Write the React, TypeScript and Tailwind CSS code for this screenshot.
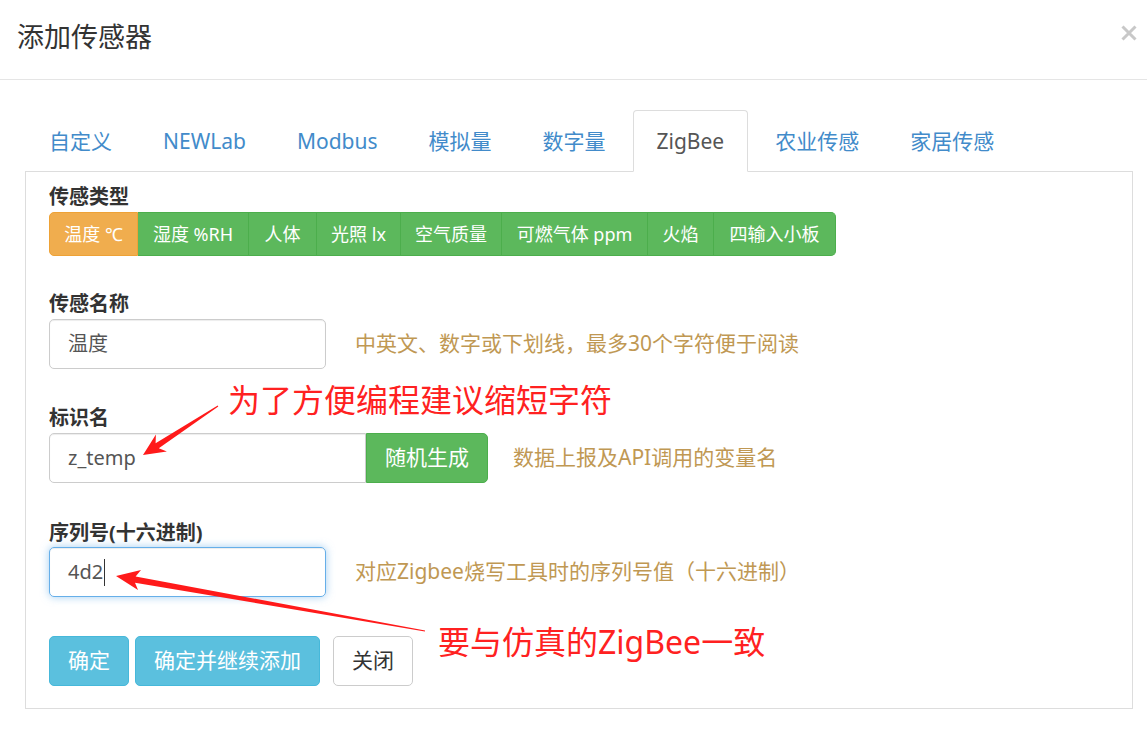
import React from "react";

const types = [
  { label: "温度 ℃", w: "w-[89px]", active: true },
  { label: "湿度 %RH", w: "w-[111px]" },
  { label: "人体", w: "w-[68px]" },
  { label: "光照 lx", w: "w-[84px]" },
  { label: "空气质量", w: "w-[101px]" },
  { label: "可燃气体 ppm", w: "w-[146px]" },
  { label: "火焰", w: "w-[66px]" },
  { label: "四输入小板", w: "w-[122px]" },
];

const tabs = ["自定义", "NEWLab", "Modbus", "模拟量", "数字量", "ZigBee", "农业传感", "家居传感"];

export default function App() {
  return (
    <div className="relative w-[1147px] h-[732px] overflow-hidden bg-white text-[#333] font-['Noto_Sans','Noto_Sans_CJK_SC',sans-serif]">
      {/* header */}
      <div className="flex h-[80px] items-start justify-between border-b border-[#e5e5e5] pl-[17px] pr-[10px]">
        <div className="pt-[18px] text-[27px] leading-[38px] text-[#333]">添加传感器</div>
        <svg className="mt-[25px]" width="16" height="16" viewBox="0 0 16 16">
          <path d="M1.5 1.5 L14.5 14.5 M14.5 1.5 L1.5 14.5" stroke="#c8c8c8" strokeWidth="3" />
        </svg>
      </div>

      {/* body */}
      <div className="pt-[30px] pl-[25px] pr-[14px]">
        <ul className="flex border-b border-[#ddd]">
          {tabs.map((t) => {
            const active = t === "ZigBee";
            return (
              <li
                key={t}
                className={
                  active
                    ? "mr-[3px] -mb-px rounded-t-[4px] border border-[#ddd] border-b-transparent bg-white px-[23px] py-[16px] text-[21px] leading-[28px] text-[#555]"
                    : "mr-[3px] -mb-px rounded-t-[4px] border border-transparent px-[23px] py-[16px] text-[21px] leading-[28px] text-[#428bca]"
                }
              >
                {t}
              </li>
            );
          })}
        </ul>

        <div className="h-[537px] border-x border-b border-[#ddd] pl-[23px] pt-[11px]">
          {/* 传感类型 */}
          <div className="text-[20px] font-bold leading-[28px] text-[#333]">传感类型</div>
          <div className="mt-[1px] flex">
            {types.map((t, i) => (
              <div
                key={t.label}
                className={
                  (t.active
                    ? "bg-[#f0ad4e] border-[#eea236] "
                    : "bg-[#5cb85c] border-[#4cae4c] ") +
                  t.w +
                  " flex h-[44px] items-center justify-center border-y border-r text-[18px] text-white " +
                  (i === 0 ? "rounded-l-[5px] border-l " : "") +
                  (i === types.length - 1 ? "rounded-r-[5px]" : "")
                }
              >
                {t.label}
              </div>
            ))}
          </div>

          {/* 传感名称 */}
          <div className="mt-[34px] text-[20px] font-bold leading-[28px] text-[#333]">传感名称</div>
          <div className="mt-[1px] flex items-center">
            <div className="flex h-[50px] w-[277px] items-center rounded-[5px] border border-[#ccc] px-[18px] text-[20px] text-[#555] shadow-[inset_0_1px_1px_rgba(0,0,0,0.075)]">
              温度
            </div>
            <div className="ml-[29px] text-[21px] text-[#c09853]">中英文、数字或下划线，最多30个字符便于阅读</div>
          </div>

          {/* 标识名 */}
          <div className="mt-[35px] text-[20px] font-bold leading-[28px] text-[#333]">标识名</div>
          <div className="mt-[1px] flex items-center">
            <div className="flex h-[50px] w-[317px] items-center rounded-l-[5px] border border-[#ccc] px-[18px] text-[20px] text-[#555] shadow-[inset_0_1px_1px_rgba(0,0,0,0.075)]">
              z_temp
            </div>
            <div className="flex h-[50px] w-[122px] items-center justify-center rounded-r-[5px] border border-[#4cae4c] bg-[#5cb85c] text-[21px] text-white">
              随机生成
            </div>
            <div className="ml-[25px] text-[21px] text-[#c09853]">数据上报及API调用的变量名</div>
          </div>

          {/* 序列号 */}
          <div className="mt-[36px] text-[20px] font-bold leading-[28px] text-[#333]">序列号(十六进制)</div>
          <div className="mt-[0px] flex items-center">
            <div className="flex h-[50px] w-[277px] items-center rounded-[5px] border border-[#66afe9] px-[18px] text-[20px] text-[#555] shadow-[inset_0_1px_1px_rgba(0,0,0,0.075),0_0_8px_rgba(102,175,233,0.6)]">
              4d2
              <span className="ml-[1px] h-[27px] w-px bg-[#333]" />
            </div>
            <div className="ml-[29px] text-[21px] text-[#c09853]">对应Zigbee烧写工具时的序列号值（十六进制）</div>
          </div>

          {/* actions */}
          <div className="mt-[39px] flex">
            <div className="flex h-[50px] w-[80px] items-center justify-center rounded-[5px] border border-[#46b8da] bg-[#5bc0de] text-[21px] text-white">
              确定
            </div>
            <div className="ml-[6px] flex h-[50px] w-[185px] items-center justify-center rounded-[5px] border border-[#46b8da] bg-[#5bc0de] text-[21px] text-white">
              确定并继续添加
            </div>
            <div className="ml-[13px] flex h-[50px] w-[80px] items-center justify-center rounded-[5px] border border-[#ccc] bg-white text-[21px] text-[#333]">
              关闭
            </div>
          </div>
        </div>
      </div>

      {/* annotations */}
      <div className="absolute left-[228px] top-[378px] text-[32px] leading-[44px] text-[#ff2121] whitespace-nowrap">
        为了方便编程建议缩短字符
      </div>
      <div className="absolute left-[438px] top-[620px] text-[32px] leading-[44px] text-[#ff2121] whitespace-nowrap">
        要与仿真的ZigBee一致
      </div>
      <svg className="absolute left-0 top-0 pointer-events-none" width="1147" height="732">
        <polygon
          points="143,455 155.9,434.6 155.6,443.2 217.7,405.6 218.3,406.4 158.8,448.2 166.9,451.4"
          fill="#ff1a1a"
        />
        <polygon
          points="116,576 141,570 135.6,576.4 425.1,630.5 424.9,631.5 135,582.7 138,590"
          fill="#ff1a1a"
        />
      </svg>
    </div>
  );
}
